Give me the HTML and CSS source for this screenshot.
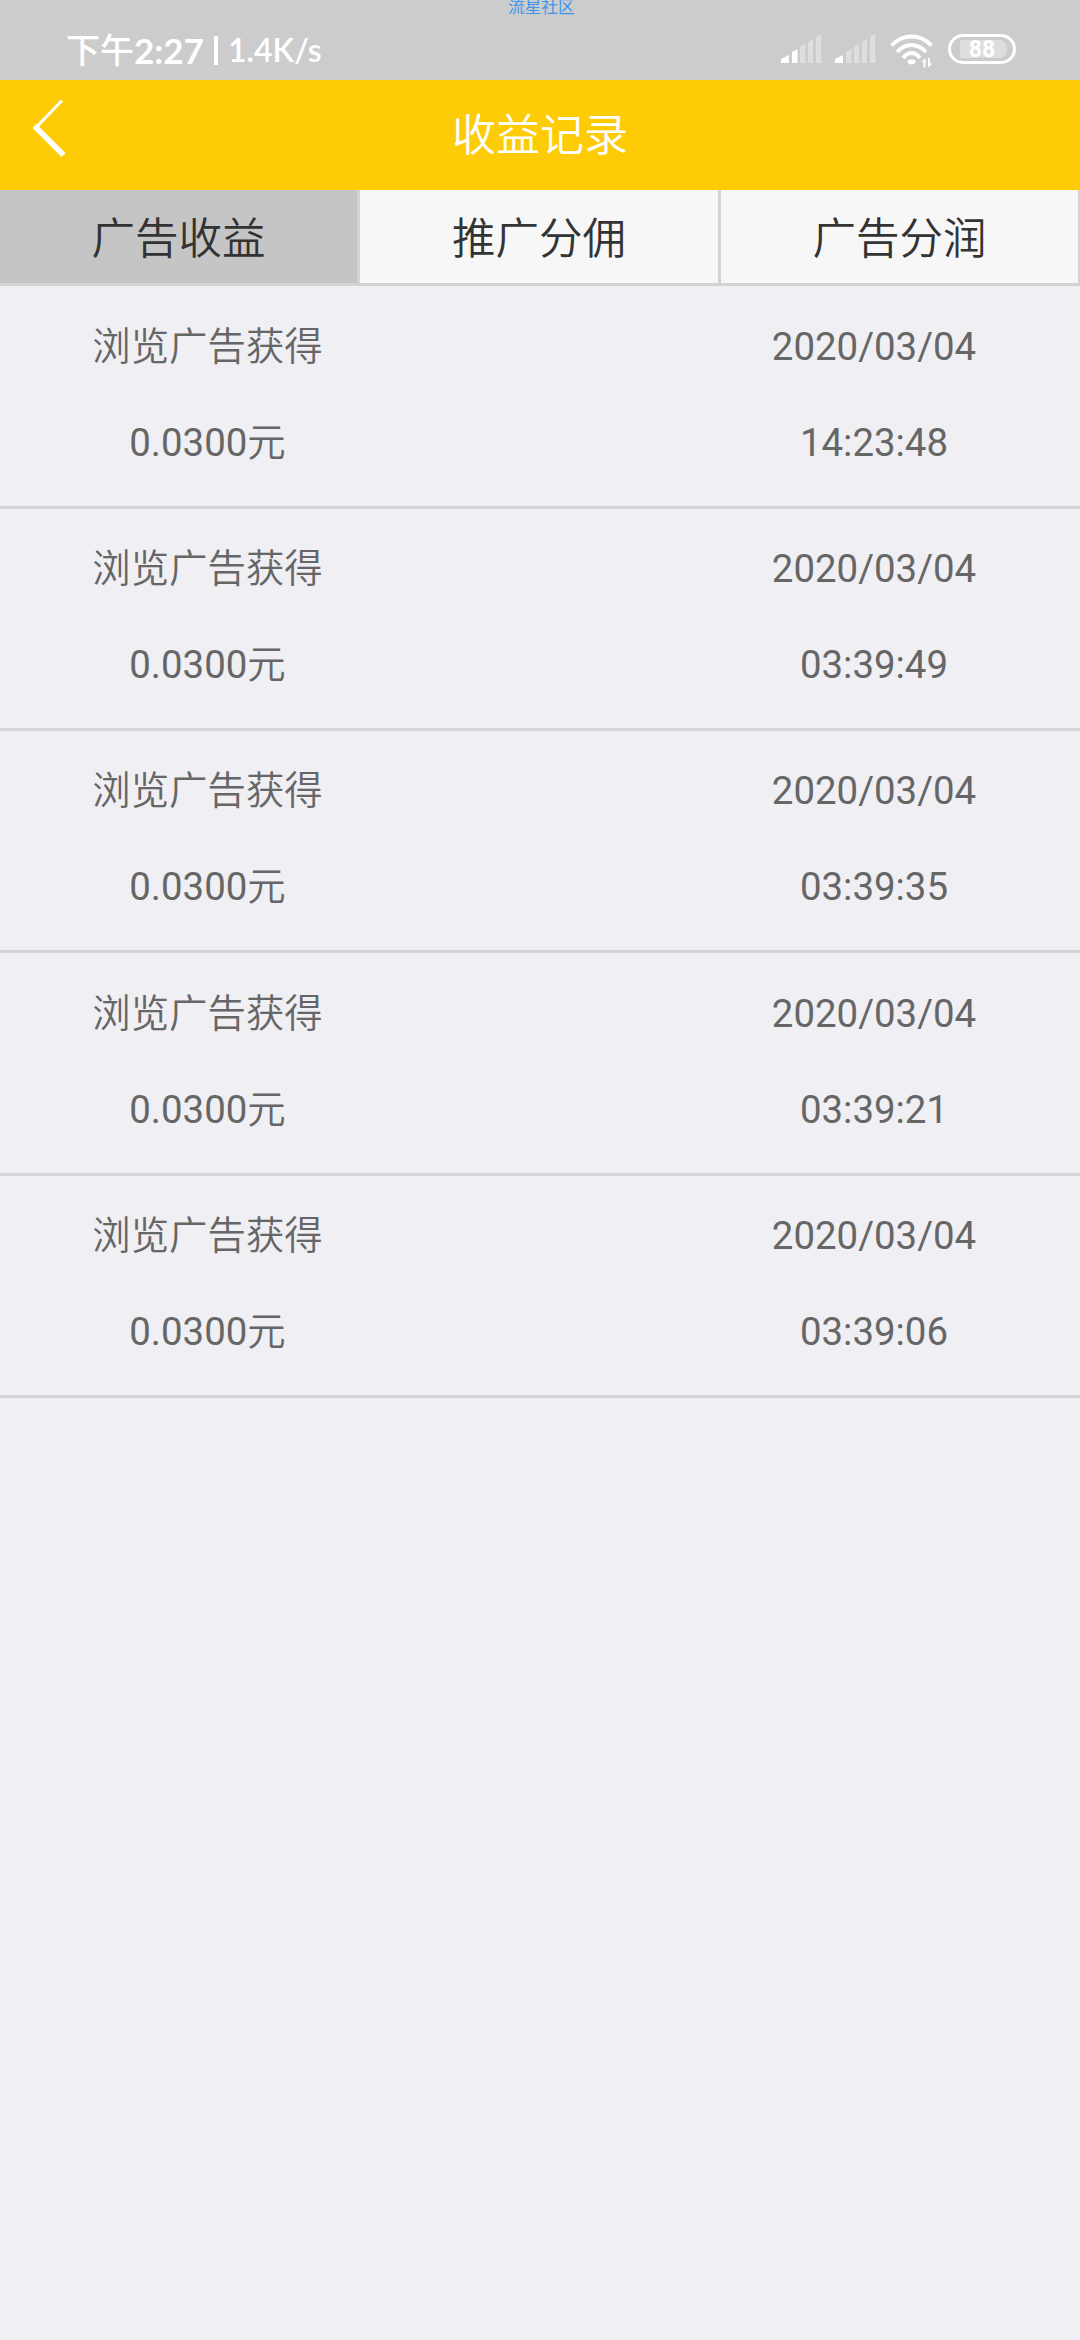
FILE: index.html
```html
<!DOCTYPE html>
<html lang="zh-CN">
<head>
  <meta charset="UTF-8">
  <meta name="viewport" content="width=device-width, initial-scale=1">
  <title>收益记录</title>
  <link rel="stylesheet" href="styles.css">
</head>
<body>

  <!-- STATUS BAR -->
  <div class="status">
    <span class="watermark">流星社区</span>
    <div class="status-left">
      <span class="time-cn">下午</span><span class="time">2:27</span>
      <span class="divider"></span>
      <span class="speed">1.4K/s</span>
    </div>
    <div class="status-right">
      <svg class="signal" viewBox="0 0 41 30">
        <path fill="#fff" d="M0 29v-4l8-4v8zM11 29V18l5.500-3v14z"/>
        <path fill="#dedede" d="M19 29V13l5.300-3v19zM27 29V8l5-3v24zM35 29V3l5.300-3v29z"/>
      </svg>
      <svg class="signal" viewBox="0 0 41 30">
        <path fill="#fff" d="M0 29v-4l8-4v8z"/>
        <path fill="#dedede" d="M11 29V18l5.500-3v14zM19 29V13l5.300-3v19zM27 29V8l5-3v24zM35 29V3l5.300-3v29z"/>
      </svg>
      <svg class="wifi" viewBox="0 0 44 36">
        <g fill="none" stroke="#fff" stroke-width="4">
          <path d="M1.500 11.500Q10 2.500 21.500 2.500T41.500 11.500"/>
          <path d="M7 18Q13.500 11 21.500 11T36 18"/>
          <path d="M13 24Q17 19 21.500 19T30 24"/>
        </g>
        <path fill="#fff" d="M17 27q4.500-3.500 9 0q-1.500 3.500-4.500 3.500T17 27zM31.500 28l4-4v9.500h-2V28zM38 33.500V24h2v5.500h2.500z"/>
      </svg>
      <div class="battery"><span>88</span></div>
    </div>
  </div>

  <!-- HEADER -->
  <header>
    <a href="#" class="back">
      <svg viewBox="0 0 34 60">
        <path d="M30 1.500L4 28.500" stroke="#fff" stroke-width="3"/>
        <path d="M2.500 27L31.500 56" stroke="#fff" stroke-width="5.500"/>
      </svg>
    </a>
    <h1>收益记录</h1>
  </header>

  <nav class="tabs">
    <a href="#" class="active">广告收益</a>
    <a href="#">推广分佣</a>
    <a href="#">广告分润</a>
  </nav>

  <!-- LIST -->
  <ul class="records">
    <li>
      <div class="info"><p>浏览广告获得</p><p>0.0300<span>元</span></p></div>
      <div class="date"><p>2020/03/04</p><p>14:23:48</p></div>
    </li>
    <li>
      <div class="info"><p>浏览广告获得</p><p>0.0300<span>元</span></p></div>
      <div class="date"><p>2020/03/04</p><p>03:39:49</p></div>
    </li>
    <li>
      <div class="info"><p>浏览广告获得</p><p>0.0300<span>元</span></p></div>
      <div class="date"><p>2020/03/04</p><p>03:39:35</p></div>
    </li>
    <li>
      <div class="info"><p>浏览广告获得</p><p>0.0300<span>元</span></p></div>
      <div class="date"><p>2020/03/04</p><p>03:39:21</p></div>
    </li>
    <li>
      <div class="info"><p>浏览广告获得</p><p>0.0300<span>元</span></p></div>
      <div class="date"><p>2020/03/04</p><p>03:39:06</p></div>
    </li>
  </ul>

</body>
</html>
```
FILE: styles.css
```css
* {box-sizing:border-box; margin:0; padding:0;}
body {
  font-family:Roboto,"Noto Sans CJK SC",sans-serif;
  font-weight:400; background:#efeff4; color:#666;
  min-height:100vh; overflow-x:hidden;
}
a {text-decoration:none; color:inherit;}
svg {display:block;}

.status {
  position:relative; height:80px; background:#ccc; color:#fff;
  display:flex; justify-content:space-between;
  padding:34px 64px 0 66px;
}
.watermark {
  position:absolute; left:508px; top:-1px;
  font-size:16.7px; line-height:18px; color:#3d96ec;
}
.status-left {display:flex; align-items:center; height:32px; font-family:Lato,"Noto Sans CJK SC",sans-serif;}
.time-cn {font-size:34px; font-weight:500; line-height:32px;}
.time {font-size:35px; font-weight:700; line-height:32px;}
.divider {width:4px; height:29px; background:#fff; margin:0 10px;}
.speed {font-size:32px; font-weight:600; line-height:32px;}

.status-right {display:flex; align-items:flex-start;}
.signal {width:41px; height:30px; margin-right:13px;}
.wifi {width:44px; height:36px; margin:0 14px 0 1px;}
.battery {
  width:68px; height:30px; border:3px solid #fff; border-radius:15px;
  padding:3px 6px 3px 9px;
}
.battery span {
  display:block; height:18px; background:#dedede; border-radius:2px 8px 8px 2px;
  font:700 23px/19px Roboto,sans-serif; text-align:center; padding-right:3px;
}

header {
  position:relative; height:110px; background:#fecc07; color:#fff;
  display:flex; align-items:center; justify-content:center;
}
.back {position:absolute; left:32px; top:19px;}
.back svg {width:34px; height:60px;}
header h1 {font-size:44px; font-weight:350; line-height:110px; padding-top:2px;}

.tabs {
  display:grid; grid-template-columns:360px 361px 359px;
  height:96px; border-bottom:3px solid #d3d3d3;
}
.tabs a {
  background:#f7f7f7; border-right:3px solid #d3d3d3; color:#333;
  font-size:43.5px; font-weight:350; line-height:99px; height:93px; text-align:center;
}
.tabs a:last-child {border-right-width:2px;}
.tabs .active {background:#c5c5c5;}

.records {list-style:none; padding-top:.7px;}
.records li {
  display:flex; justify-content:space-between;
  height:222.25px; padding-top:12.3px;
  border-bottom:3px solid #d3d3d8;
}
.records p {font-size:38.4px; line-height:96px; text-align:center;}
.info {width:415px;}
.info p:first-child, .info span {font-weight:350;}
.date {width:412px;}
```
